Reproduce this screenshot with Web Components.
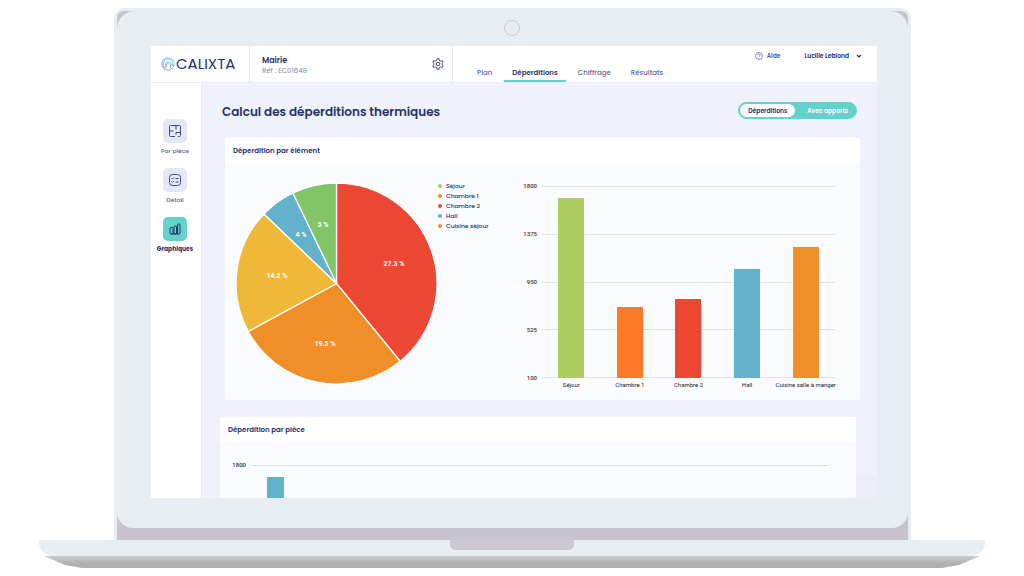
<!DOCTYPE html>
<html lang="fr">
<head>
<meta charset="utf-8">
<meta name="viewport" content="width=device-width, initial-scale=1">
<title>Calixta – Déperditions</title>
<style>
  :root {
    --navy: #25316b;
    --muted: #5d6797;
    --teal: #62d2ca;
    --shell: #e8edf1;
    --mauve: #c7c4d0;
    --line: #e8e9f6;
    --canvas: #eff2fb;
    --panel: #fafbff;
  }
  body { margin: 0; background: #fff; color: var(--navy); font: 500 7px/10px Poppins, Inter, "Open Sans", sans-serif; }
</style>
</head>
<body>
<laptop-frame>
  <app-header></app-header>
  <side-nav></side-nav>
  <main-view></main-view>
</laptop-frame>

<script>
const define = (name, html, setup) => {
  const template = document.createElement('template');
  template.innerHTML = html;
  customElements.define(name, class extends HTMLElement {
    constructor() {
      super();
      this.attachShadow({ mode: 'open' }).append(template.content.cloneNode(true));
    }
    connectedCallback() {
      if (setup && !this.ready) { this.ready = true; setup(this, this.shadowRoot); }
    }
  });
};

define('laptop-frame', `
  <style>
    :host { display: flex; flex-direction: column; box-sizing: border-box; height: 100vh; min-height: 320px; padding: 8px 39px; }
    .lid { flex: 1; min-height: 0; display: flex; box-sizing: border-box; margin: 0 74px 0 75px; border: solid var(--shell); border-width: 3px 3px 0; border-radius: 10px 10px 0 0; background: var(--mauve); padding-bottom: 12px; }
    .bezel { flex: 1; min-width: 0; display: grid; grid-template-rows: 35px minmax(0, 1fr) 30px; padding: 0 31px 0 34px; border-radius: 18px 18px 16px 16px; background: var(--shell); }
    .camera { justify-self: center; align-self: center; box-sizing: border-box; width: 16px; height: 16px; margin: 0 4px 2px 0; border: 1px solid #cbc9d3; border-radius: 50%; }
    .screen { display: grid; grid-template: "top top" 37px "side main" minmax(0, 1fr) / 51px minmax(0, 1fr); overflow: hidden; background: var(--canvas); }
    ::slotted(app-header) { grid-area: top; }
    ::slotted(side-nav) { grid-area: side; }
    ::slotted(main-view) { grid-area: main; }
    .base { display: flex; justify-content: center; height: 16px; border-radius: 0 0 14px 14px; background: var(--shell); }
    .notch { width: 124px; height: 10px; border-radius: 0 0 5px 5px; background: #cbc8d3; }
    .under { height: 12px; margin: 0 5px; background: linear-gradient(#c9cccf, #b0b0b0 60%, #aeaeae); clip-path: polygon(0 0, 100% 0, calc(100% - 21px) 9px, calc(100% - 38px) 100%, 38px 100%, 21px 9px); }
  </style>
  <div class="lid"><div class="bezel">
    <div class="camera"></div>
    <div class="screen"><slot></slot></div>
  </div></div>
  <div class="base"><div class="notch"></div></div>
  <div class="under"></div>
`);

define('app-header', `
  <style>
    :host { display: flex; box-sizing: border-box; background: #fff; border-bottom: 1px solid var(--line); }
    .brand { display: flex; align-items: center; gap: 1px; box-sizing: border-box; width: 99px; padding-left: 10px; border-right: 1px solid var(--line); color: var(--navy); text-decoration: none; font-size: 15px; font-weight: 400; line-height: 16px; }
    .project { display: flex; align-items: center; justify-content: space-between; box-sizing: border-box; width: 203px; padding: 0 8px 0 12px; border-right: 1px solid var(--line); }
    .name { padding-top: 3px; }
    strong { display: block; font-size: 8px; font-weight: 600; }
    .ref { color: #8088ae; font-weight: 400; }
    button { display: flex; align-items: center; border: 0; padding: 0; background: none; color: inherit; font: inherit; cursor: pointer; }
    .right { flex: 1; display: flex; justify-content: space-between; padding-right: 15px; }
    nav { display: flex; align-items: flex-end; padding-left: 16px; }
    nav a { padding: 0 8px 1px; border-bottom: 2px solid transparent; color: var(--muted); text-decoration: none; line-height: 12px; margin-right: 4px; }
    nav a[aria-current] { color: var(--navy); font-weight: 600; border-color: var(--teal); }
    .account { display: flex; align-items: flex-start; padding-top: 5px; gap: 24px; }
    .help { display: flex; align-items: center; gap: 4px; color: #5450b8; text-decoration: none; font-size: 6px; font-weight: 600; }
    .user { gap: 7px; font-size: 6px; font-weight: 600; }
  </style>
  <a class="brand" href="#">
    <svg width="14" height="14" viewBox="0 0 28 28" fill="none" stroke-linecap="round" aria-hidden="true">
      <defs><linearGradient id="g" x1="1" y1="0" x2="0" y2="1"><stop stop-color="#71d7dc"/><stop offset=".5" stop-color="#82a9dd"/><stop offset="1" stop-color="#b08ce0"/></linearGradient></defs>
      <g stroke="url(#g)" stroke-width="2"><path d="M20 25A12.500 12.500 0 1 1 26 10"/><path d="M26.500 14A12.500 12.500 0 0 1 21 24"/><path d="M9 22A9.500 9.500 0 1 1 23 17"/><path d="M9 18a6 6 0 1 1 11 0"/><path d="M10 20v-4l4.500-4 4.500 4v5"/></g>
    </svg>
    <span>CALIXTA</span>
  </a>
  <div class="project">
    <div class="name"><strong>Mairie</strong><span class="ref">Réf : EC01648</span></div>
    <button aria-label="Paramètres">
      <svg width="12" height="12" viewBox="0 0 24 24" fill="none" stroke="currentColor" stroke-width="1.800" stroke-linejoin="round"><path d="M10 1.500h4l.8 3.400 2.300 1.300 3.300-1 2 3.500-2.500 2.400v2l2.500 2.300-2 3.500-3.300-1-2.300 1.300-.8 3.300h-4l-.8-3.300-2.300-1.300-3.300 1-2-3.500 2.500-2.300v-2L1.600 8.700l2-3.500 3.300 1 2.300-1.300z"/><circle cx="12" cy="12" r="3.600"/></svg>
    </button>
  </div>
  <div class="right">
    <nav aria-label="Étapes">
      <a href="#plan">Plan</a><a href="#deperditions" aria-current="page">Déperditions</a><a href="#chiffrage">Chiffrage</a><a href="#resultats">Résultats</a>
    </nav>
    <div class="account">
      <a class="help" href="#aide"><svg width="8" height="8" viewBox="0 0 16 16" fill="none" stroke="currentColor" stroke-width="1.400" aria-hidden="true"><circle cx="8" cy="8" r="7"/><path d="M5.800 6.400a2.200 2.200 0 1 1 3.400 1.800Q8 8.800 8 9.800M8 11v1.500"/></svg>Aide</a>
      <button class="user">Lucille Leblond <svg width="6" height="6" viewBox="0 0 6 6" fill="none" stroke="currentColor" stroke-width="1.200" aria-hidden="true"><path d="M1 2l2 2 2-2"/></svg></button>
    </div>
  </div>
`);

define('side-nav', `
  <style>
    :host { display: flex; flex-direction: column; gap: 12px; padding: 36px 2px 0 0; background: #fff; border-right: 1px solid var(--line); }
  </style>
  <nav-tile label="Par pièce"><svg width="14" height="14" viewBox="0 0 28 28" fill="none" stroke="currentColor" stroke-width="2"><path d="M14 25H5q-2 0-2-2V5q0-2 2-2h18q2 0 2 2v18q0 2-2 2h-3M3 14h8M16 3v8M25 17h-9v4"/></svg></nav-tile>
  <nav-tile label="Détail"><svg width="14" height="14" viewBox="0 0 28 28" fill="none" stroke="currentColor" stroke-width="2"><rect x="3" y="3" width="22" height="22" rx="6"/><path d="M7 10l2 2 3-3m3 2h6M7 17l2 2 3-3m3 2h6"/></svg></nav-tile>
  <nav-tile label="Graphiques" active><svg width="14" height="14" viewBox="0 0 28 28" fill="none" stroke="currentColor" stroke-width="2"><rect x="4" y="11" width="6" height="13" rx="2"/><rect x="12" y="8" width="5" height="16" rx="2"/><rect x="19" y="4" width="5" height="20" rx="2"/><path d="M7 24h14"/></svg></nav-tile>
`);

define('nav-tile', `
  <style>
    :host { display: block; }
    button { display: flex; flex-direction: column; align-items: center; gap: 3px; width: 100%; padding: 0; border: 0; background: none; color: var(--muted); font: inherit; font-size: 6px; line-height: 10px; cursor: pointer; white-space: nowrap; }
    .tile { display: grid; place-items: center; width: 24px; height: 24px; border-radius: 5px; background: #e5e7f5; color: #414b80; }
    :host([active]) button { color: var(--navy); font-weight: 700; }
    :host([active]) .tile { background: var(--teal); color: var(--navy); }
  </style>
  <button><span class="tile"><slot></slot></span><span class="label"></span></button>
`, (el, root) => { root.querySelector('.label').textContent = el.getAttribute('label'); });

define('mode-switch', `
  <style>
    :host { display: flex; box-sizing: border-box; height: 17px; padding: 1px; border: 1px solid var(--teal); border-radius: 9px; background: var(--teal); }
    button { border: 0; padding: 0 8px; border-radius: 8px; background: none; color: #fff; font: inherit; font-size: 6px; font-weight: 600; line-height: 12px; cursor: pointer; }
    button[aria-pressed=true] { background: #fff; color: var(--navy); }
    button + button { padding: 0 7px 0 12px; }
  </style>
  <button aria-pressed="true">Déperditions</button><button aria-pressed="false">Avec apports</button>
`);

define('main-view', `
  <style>
    :host { position: relative; display: flex; flex-direction: column; min-width: 0; }
    :host::after { content: ""; position: absolute; right: 0; bottom: 0; width: 21px; height: 22px; background: #ebedf9; }
    header { display: flex; align-items: center; justify-content: space-between; height: 55px; padding: 0 20px 0 20px; flex: none; }
    h1 { margin: 0; padding-top: 2px; font-size: 12px; line-height: 18px; font-weight: 600; }
    chart-card { flex: none; margin: 0 17px 17px 23px; }
    chart-card.rooms { margin: 0 21px 0 18px; }
    .overview { display: grid; grid-template-columns: 202px 85px minmax(0, 1fr); padding: 20px 25px 10px 11px; }
    .overview chart-legend { margin-top: -2px; }
    .overview bar-chart { padding-top: 3px; }
    .by-room { padding: 23px 27px 0 12px; }
  </style>
  <header><h1>Calcul des déperditions thermiques</h1><mode-switch></mode-switch></header>
  <chart-card heading="Déperdition par élément">
    <div class="overview">
      <pie-chart></pie-chart>
      <chart-legend></chart-legend>
      <bar-chart ticks="1800,1375,950,525,100" bars="Séjour:1694:#abcd62,Chambre 1:729:#ff7a26,Chambre 2:800:#eb4733,Hall:1070:#62b2cc,Cuisine salle à manger:1262:#f08e28"></bar-chart>
    </div>
  </chart-card>
  <chart-card class="rooms" heading="Déperdition par pièce">
    <div class="by-room"><bar-chart columns="12" ticks="1800" bars=":1700:#62b2cc"></bar-chart></div>
  </chart-card>
`);

define('chart-card', `
  <style>
    :host { display: block; overflow: hidden; border-radius: 0 0 4px 4px; background: var(--panel); }
    h2 { margin: 0; padding: 0 8px; background: #fff; font-size: 7px; line-height: 25px; font-weight: 600; }
  </style>
  <section><h2></h2><slot></slot></section>
`, (el, root) => { root.querySelector('h2').textContent = el.getAttribute('heading'); });

define('pie-chart', `
  <style>
    :host { display: block; }
    svg { display: block; width: 100%; }
    path { stroke: #fff; stroke-width: 1.300; stroke-linejoin: round; }
    text { fill: #fff; font: 700 7px Roboto, sans-serif; text-anchor: middle; }
  </style>
  <svg viewBox="0 0 202 202" role="img" aria-label="Répartition des déperditions"></svg>
`, (el, root) => {
  /* start and end angles in degrees, clockwise from twelve o'clock */
  const slices = [
    [0, 140.700, '#eb4733', '27.3 %', 158, 83],
    [140.700, 241.500, '#f08e28', '19.5 %', 89, 163],
    [241.500, 313.800, '#efb838', '14.2 %', 41, 95],
    [313.800, 334.300, '#62b2cc', '4 %', 65, 54],
    [334.300, 360, '#82c568', '5 %', 87, 44]
  ];
  const at = deg => {
    const a = deg * Math.PI / 180;
    return (100.5 + 100.5 * Math.sin(a)).toFixed(2) + ' ' + (100.5 - 100.5 * Math.cos(a)).toFixed(2);
  };
  root.querySelector('svg').innerHTML = slices.map(([a, b, fill]) =>
    `<path fill="${fill}" d="M100.5 100.5L${at(a)}A100.5 100.5 0 0 1 ${at(b)}Z"/>`).join('') +
    slices.map(([, , , label, x, y]) => `<text x="${x}" y="${y}">${label}</text>`).join('');
});

define('chart-legend', `
  <style>
    :host { display: block; }
    ul { margin: 0; padding: 0; list-style: none; font-size: 6px; }
    li { display: flex; align-items: center; gap: 4px; height: 10px; color: var(--navy); white-space: nowrap; }
    li::before { content: ""; width: 4px; height: 4px; border-radius: 50%; background: var(--dot); }
  </style>
  <ul>
    <li style="--dot:#abcd62">Séjour</li>
    <li style="--dot:#f08e28">Chambre 1</li>
    <li style="--dot:#eb4733">Chambre 2</li>
    <li style="--dot:#62b2cc">Hall</li>
    <li style="--dot:#f08e28">Cuisine séjour</li>
  </ul>
`);

define('bar-chart', `
  <style>
    :host { display: block; color: #333; font: 500 6px/10px Roboto, sans-serif; }
    .chart { display: grid; grid-template: 192px 12px / 14px minmax(0, 1fr); column-gap: 5px; }
    .ticks, .lines { display: flex; flex-direction: column; justify-content: space-between; }
    .ticks { text-align: right; }
    .ticks span { height: 0; line-height: 0; }
    .lines, .bars { grid-area: 1 / 2; }
    .lines i { height: 1px; background: #e0e1e6; }
    .bars, .names { display: grid; grid-template-columns: repeat(var(--columns), minmax(0, 1fr)); }
    .bars { align-items: end; justify-items: center; }
    .bars i { width: var(--bar, 26px); }
    .names { grid-area: 2 / 2; align-items: end; color: #222; font-weight: 400; }
    .names span { display: flex; justify-content: center; white-space: nowrap; }
  </style>
  <div class="chart"><div class="ticks"></div><div class="lines"></div><div class="bars"></div><div class="names"></div></div>
`, (el, root) => {
  const ticks = el.getAttribute('ticks').split(',');
  const bars = el.getAttribute('bars').split(',').map(b => b.split(':'));
  const put = (cls, html) => { root.querySelector(cls).innerHTML = html; };
  root.querySelector('.chart').style.setProperty('--columns', el.getAttribute('columns') || bars.length);
  if (el.hasAttribute('columns')) root.querySelector('.chart').style.setProperty('--bar', '17px');
  put('.ticks', ticks.map(t => `<span>${t}</span>`).join(''));
  put('.lines', ticks.map(() => '<i></i>').join(''));
  put('.bars', bars.map(([, v, c]) => `<i style="height:${Math.round((v - 100) / 17)}%;background:${c}"></i>`).join(''));
  put('.names', bars.map(([n]) => n ? `<span>${n}</span>` : '').join(''));
});
</script>
</body>
</html>
